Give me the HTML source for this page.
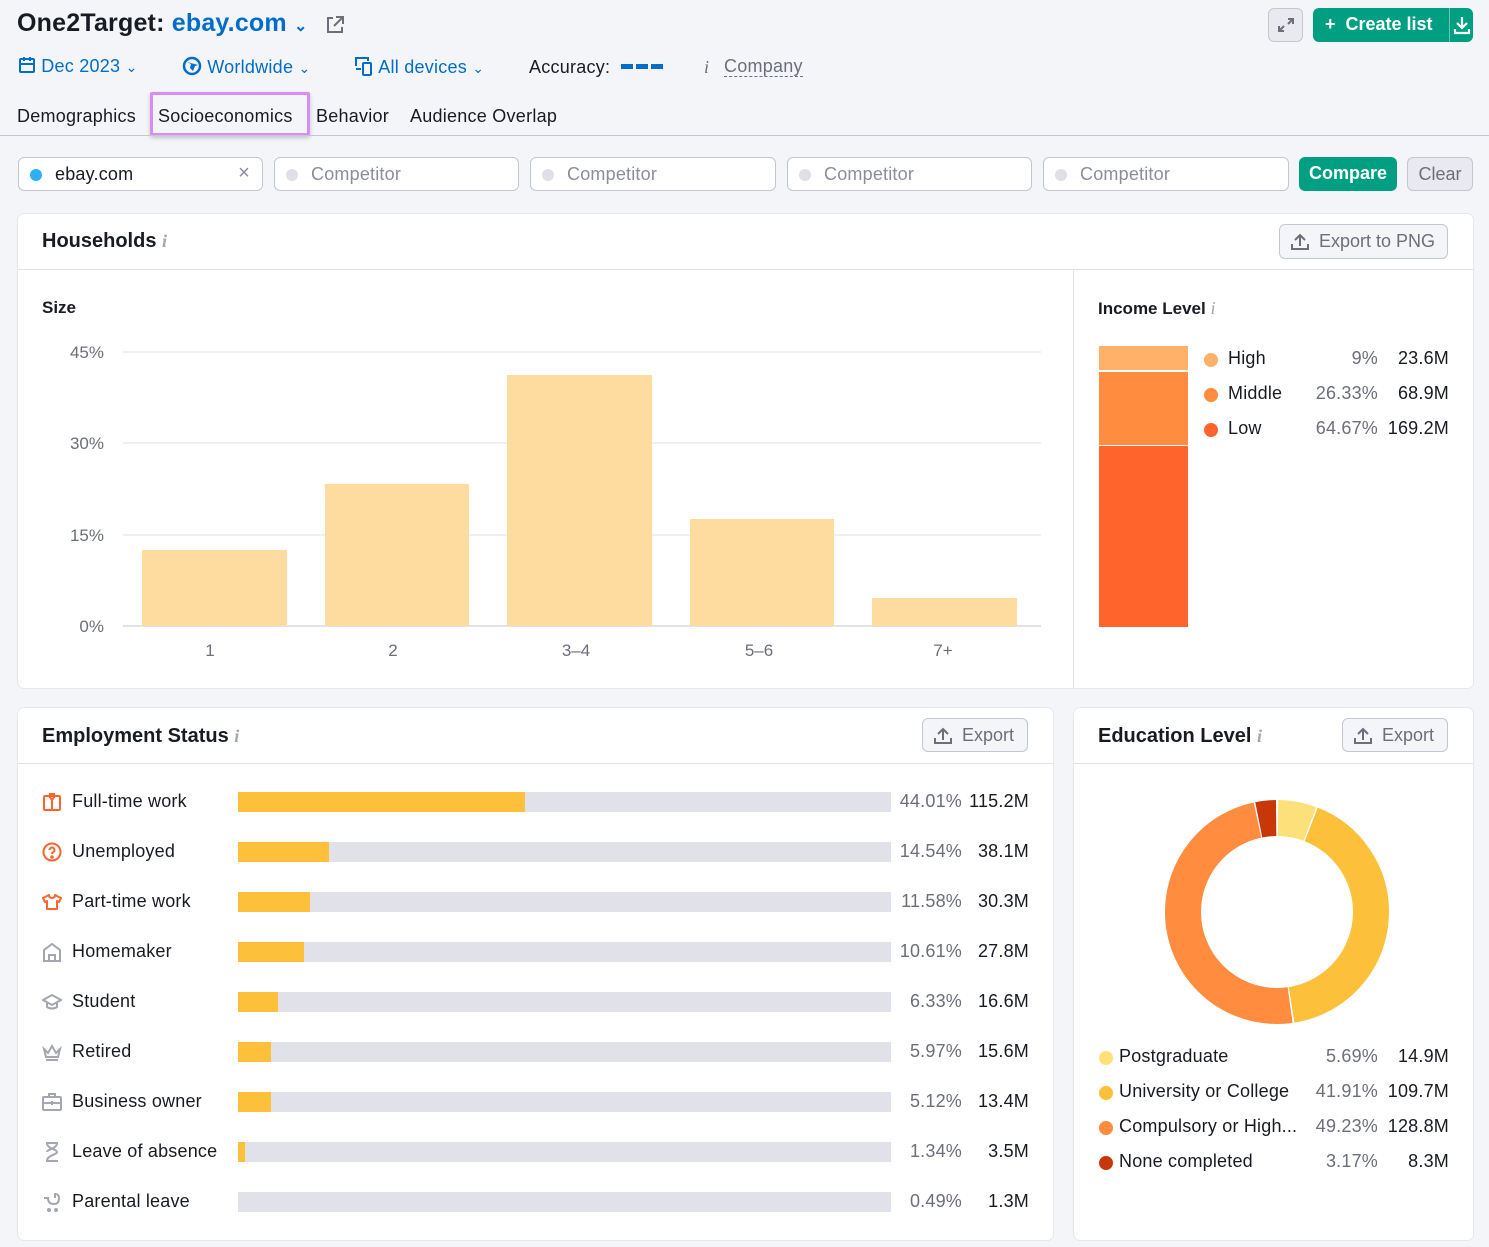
<!DOCTYPE html>
<html><head><meta charset="utf-8"><style>
*{box-sizing:border-box;margin:0;padding:0}
body{width:1489px;height:1247px;background:#f4f5f9;font-family:"Liberation Sans",sans-serif;color:#191b23;position:relative;overflow:hidden}
.a{position:absolute}
.blue{color:#006dca}
.t{font-size:18px;letter-spacing:.25px}
.inp{position:absolute;top:157px;height:34px;background:#fff;border:1px solid #c4c7cf;border-radius:6px;font-size:18px;letter-spacing:.2px;color:#8b8e99;padding:6px 0 0 36px}
.inp i{position:absolute;left:11px;top:11px;width:12px;height:12px;border-radius:50%;background:#dfe0e6}
.card{position:absolute;background:#fff;border-radius:6px;box-shadow:0 0 0 1px #e6e7ec}
.btn{position:absolute;border:1px solid #c4c7cf;background:#f4f5f9;border-radius:6px;font-size:18px;color:#6c6e79}
.h{font-size:20px;font-weight:bold}
.ic{color:#a4a6b0;font-style:italic;font-family:"Liberation Serif",serif;font-size:18px}
.row{position:absolute;left:42px;width:990px;height:20px;font-size:18px;letter-spacing:.2px}
.row .l{position:absolute;left:30px;top:-1px}
.row .bg{position:absolute;left:196px;top:0;width:653px;height:20px;background:#e0e1e9}
.row .f{position:absolute;left:0;top:0;height:20px;background:#fcc03b}
.row .p{position:absolute;right:70px;top:-1px;color:#6c6e79;text-align:right}
.row .v{position:absolute;right:3px;top:-1px;text-align:right}
.row svg{position:absolute;left:0;top:0}
.lg{position:absolute;font-size:18px;letter-spacing:.2px;width:350px;height:22px}
.lg i{position:absolute;left:0;top:5px;width:14px;height:14px;border-radius:50%}
.lg .p{position:absolute;right:71px;color:#6c6e79}
.lg .v{position:absolute;right:0}
</style></head><body>
<div class="a" style="left:17px;top:9px;font-size:25px;font-weight:bold;letter-spacing:.2px">One2Target: <span class="blue">ebay.com</span> <span class="blue" style="font-size:16px">⌄</span></div>
<svg class="a" style="left:325px;top:15px" width="20" height="20" viewBox="0 0 20 20" fill="none" stroke="#6c6e79" stroke-width="2"><path d="M8 3H3v14h14v-5M11 2h7v7M18 2l-9 9"/></svg>
<div class="a blue t" style="left:18px;top:56px">
<svg width="18" height="18" viewBox="0 0 18 18" style="vertical-align:-2px" fill="none" stroke="#006dca" stroke-width="2"><rect x="2" y="3" width="14" height="13" rx="1"/><path d="M2 8h14M6 1v4M12 1v4"/></svg> Dec 2023 <span style="font-size:14px">⌄</span></div>
<div class="a blue t" style="left:182px;top:56px"><svg width="20" height="20" viewBox="0 0 20 20" style="vertical-align:-3px"><circle cx="10" cy="10" r="8" fill="none" stroke="#006dca" stroke-width="2.5"/><path d="M5 6l4 2-1 4 3 3 2-5 3-1" fill="#006dca"/></svg> Worldwide <span style="font-size:14px">⌄</span></div>
<div class="a blue t" style="left:354px;top:56px"><svg width="20" height="20" viewBox="0 0 20 20" style="vertical-align:-3px" fill="none" stroke="#006dca" stroke-width="2"><path d="M2 10V2h12v3M2 13h5"/><rect x="9" y="7" width="8" height="12" rx="1"/></svg> All devices <span style="font-size:14px">⌄</span></div>
<div class="a t" style="left:529px;top:57px">Accuracy:</div>
<div class="a" style="left:621px;top:64px;width:42px;height:5px;background:linear-gradient(90deg,#006dca 0 12px,transparent 12px 15px,#006dca 15px 27px,transparent 27px 30px,#006dca 30px)"></div>
<div class="a ic" style="left:704px;top:57px;color:#6c6e79">i</div>
<div class="a t" style="left:724px;top:56px;color:#6c6e79;border-bottom:1px dashed #6c6e79;line-height:20px">Company</div>
<div class="a" style="left:1268px;top:8px;width:35px;height:34px;border:1px solid #c4c7cf;background:#e9eaef;border-radius:6px"><svg width="33" height="32" viewBox="0 0 33 32" fill="none" stroke="#6c6e79" stroke-width="2"><path d="M19 10h5v5M24 10l-5 5M10 17v5h5M10 22l5-5"/></svg></div>
<div class="a" style="left:1313px;top:8px;width:160px;height:34px;background:#009f81;border-radius:6px;color:#fff;font-size:18px;font-weight:bold;padding:6px 0 0 12px">+&nbsp;&nbsp;Create list<div class="a" style="left:136px;top:0;width:1px;height:34px;background:#5fc8b4"></div><svg class="a" style="left:139px;top:7px" width="20" height="20" viewBox="0 0 20 20" fill="none" stroke="#fff" stroke-width="2.2"><path d="M10 2v11M5 8l5 5 5-5M3 14v4h14v-4"/></svg></div>
<div class="a t" style="left:17px;top:106px">Demographics</div>
<div class="a" style="left:150px;top:92px;width:160px;height:44px;border:3px solid #d78cf7;border-radius:2px;box-shadow:0 2px 4px rgba(0,0,0,.2)"></div>
<div class="a t" style="left:158px;top:106px">Socioeconomics</div>
<div class="a t" style="left:316px;top:106px">Behavior</div>
<div class="a t" style="left:410px;top:106px">Audience Overlap</div>
<div class="a" style="left:0;top:135px;width:1489px;height:1px;background:#c4c7cf"></div>
<div class="inp" style="left:18px;width:245px;color:#191b23"><i style="background:#2bb0f9"></i>ebay.com<span class="a" style="right:12px;top:4px;color:#8b8e99;font-size:20px">×</span></div>
<div class="inp" style="left:274px;width:245px"><i></i>Competitor</div>
<div class="inp" style="left:530px;width:246px"><i></i>Competitor</div>
<div class="inp" style="left:787px;width:245px"><i></i>Competitor</div>
<div class="inp" style="left:1043px;width:246px"><i></i>Competitor</div>
<div class="a" style="left:1299px;top:157px;width:98px;height:34px;background:#009f81;border-radius:6px;color:#fff;font-size:18px;font-weight:bold;text-align:center;padding-top:6px">Compare</div>
<div class="btn" style="left:1407px;top:157px;width:66px;height:34px;text-align:center;padding-top:6px;font-size:18px;background:#e9eaef">Clear</div>

<div class="card" style="left:18px;top:214px;width:1455px;height:474px">
<div class="a h" style="left:24px;top:16px">Households <span class="ic">i</span></div>
<div class="btn" style="left:1261px;top:10px;width:169px;height:35px;padding:6px 0 0 39px"><svg class="a" style="left:10px;top:8px" width="20" height="18" viewBox="0 0 20 18" fill="none" stroke="#6c6e79" stroke-width="2"><path d="M10 13V2M5 7l5-5 5 5M2 11v5h16v-5"/></svg>Export to PNG</div>
<div class="a" style="left:0;top:55px;width:1455px;height:1px;background:#e0e1e9"></div>
<div class="a" style="left:1055px;top:56px;width:1px;height:418px;background:#e0e1e9"></div>
<div class="a" style="left:24px;top:84px;font-size:17px;font-weight:bold">Size</div>
<svg class="a" style="left:0;top:0" width="1055" height="474" font-family="Liberation Sans" font-size="17" fill="#6c6e79">
<g stroke="#e0e1e9"><line x1="105" y1="138" x2="1023" y2="138"/><line x1="105" y1="229" x2="1023" y2="229"/><line x1="105" y1="321" x2="1023" y2="321"/><line x1="105" y1="412" x2="1023" y2="412" stroke="#c4c7cf"/></g>
<text x="86" y="144" text-anchor="end">45%</text><text x="86" y="235" text-anchor="end">30%</text><text x="86" y="327" text-anchor="end">15%</text><text x="86" y="418" text-anchor="end">0%</text>
<g fill="#fedc9f"><rect x="124" y="336" width="145" height="76"/><rect x="307" y="270" width="144" height="142"/><rect x="489" y="161" width="145" height="251"/><rect x="672" y="305" width="144" height="107"/><rect x="854" y="384" width="145" height="28"/></g>
<g text-anchor="middle"><text x="192" y="442">1</text><text x="375" y="442">2</text><text x="558" y="442">3–4</text><text x="741" y="442">5–6</text><text x="925" y="442">7+</text></g>
</svg>
<div class="a" style="left:1080px;top:84px;font-size:17px;font-weight:bold">Income Level <span class="ic" style="font-weight:normal">i</span></div>
<div class="a" style="left:1081px;top:132px;width:89px;height:24px;background:#ffb16a"></div>
<div class="a" style="left:1081px;top:158px;width:89px;height:73px;background:#ff8c3f"></div>
<div class="a" style="left:1081px;top:232px;width:89px;height:181px;background:#ff642d"></div>
<div class="lg" style="left:1186px;top:134px;width:245px"><i style="background:#ffb16a"></i><span class="a" style="left:24px">High</span><span class="p">9%</span><span class="v">23.6M</span></div>
<div class="lg" style="left:1186px;top:169px;width:245px"><i style="background:#ff8c3f"></i><span class="a" style="left:24px">Middle</span><span class="p">26.33%</span><span class="v">68.9M</span></div>
<div class="lg" style="left:1186px;top:204px;width:245px"><i style="background:#ff642d"></i><span class="a" style="left:24px">Low</span><span class="p">64.67%</span><span class="v">169.2M</span></div>
</div>

<div class="card" style="left:18px;top:708px;width:1035px;height:532px">
<div class="a h" style="left:24px;top:17px">Employment Status <span class="ic">i</span></div>
<div class="btn" style="left:904px;top:10px;width:106px;height:34px;padding:6px 0 0 39px"><svg class="a" style="left:10px;top:8px" width="20" height="18" viewBox="0 0 20 18" fill="none" stroke="#6c6e79" stroke-width="2"><path d="M10 13V2M5 7l5-5 5 5M2 11v5h16v-5"/></svg>Export</div>
<div class="a" style="left:0;top:55px;width:1035px;height:1px;background:#e0e1e9"></div>
</div>
<div class="row" style="top:792px"><svg width="20" height="20" viewBox="0 0 20 20" fill="none" stroke="#ff642d" stroke-width="2"><rect x="2" y="4" width="16" height="14" rx="1"/><path d="M7 4l3 4 3-4M10 8v10M7 2h6"/></svg><span class="l">Full-time work</span><div class="bg"><div class="f" style="width:287px"></div></div><span class="p">44.01%</span><span class="v">115.2M</span></div>
<div class="row" style="top:842px"><svg width="20" height="20" viewBox="0 0 20 20" fill="none" stroke="#ff642d" stroke-width="2"><circle cx="10" cy="10" r="8.5"/><path d="M7.5 8a2.5 2.5 0 1 1 3.5 2.3c-.7.4-1 .9-1 1.7"/><circle cx="10" cy="15" r=".8" fill="#ff642d"/></svg><span class="l">Unemployed</span><div class="bg"><div class="f" style="width:91px"></div></div><span class="p">14.54%</span><span class="v">38.1M</span></div>
<div class="row" style="top:892px"><svg width="20" height="20" viewBox="0 0 20 20" fill="none" stroke="#ff642d" stroke-width="2" stroke-linejoin="round"><path d="M7 3L1 6l2 4 2-1v8h10V9l2 1 2-4-6-3c0 2-1 3-3 3S7 5 7 3z"/></svg><span class="l">Part-time work</span><div class="bg"><div class="f" style="width:72px"></div></div><span class="p">11.58%</span><span class="v">30.3M</span></div>
<div class="row" style="top:942px"><svg width="20" height="20" viewBox="0 0 20 20" fill="none" stroke="#a4a6b0" stroke-width="2"><path d="M2 19V8l8-6 8 6v11H2z"/><path d="M7 19v-6h6v6"/></svg><span class="l">Homemaker</span><div class="bg"><div class="f" style="width:66px"></div></div><span class="p">10.61%</span><span class="v">27.8M</span></div>
<div class="row" style="top:992px"><svg width="20" height="20" viewBox="0 0 20 20" fill="none" stroke="#a4a6b0" stroke-width="2"><path d="M1 8l9-5 9 5-9 5z"/><path d="M5 10v5c3 2 7 2 10 0v-5"/></svg><span class="l">Student</span><div class="bg"><div class="f" style="width:40px"></div></div><span class="p">6.33%</span><span class="v">16.6M</span></div>
<div class="row" style="top:1042px"><svg width="20" height="20" viewBox="0 0 20 20" fill="none" stroke="#a4a6b0" stroke-width="2"><path d="M2 7l4 4 4-7 4 7 4-4-2 8H4z"/><path d="M4 18h12"/></svg><span class="l">Retired</span><div class="bg"><div class="f" style="width:33px"></div></div><span class="p">5.97%</span><span class="v">15.6M</span></div>
<div class="row" style="top:1092px"><svg width="20" height="20" viewBox="0 0 20 20" fill="none" stroke="#a4a6b0" stroke-width="2"><rect x="1" y="5" width="18" height="13" rx="1"/><path d="M7 5V2h6v3M1 11h18M10 9v4"/></svg><span class="l">Business owner</span><div class="bg"><div class="f" style="width:33px"></div></div><span class="p">5.12%</span><span class="v">13.4M</span></div>
<div class="row" style="top:1142px"><svg width="20" height="20" viewBox="0 0 20 20" fill="none" stroke="#a4a6b0" stroke-width="2"><path d="M4 1h12M4 19h12M5 1c0 6 10 6 10 9s-10 3-10 9M15 1c0 6-10 6-10 9"/></svg><span class="l">Leave of absence</span><div class="bg"><div class="f" style="width:7px"></div></div><span class="p">1.34%</span><span class="v">3.5M</span></div>
<div class="row" style="top:1192px"><svg width="20" height="20" viewBox="0 0 20 20" fill="none" stroke="#a4a6b0" stroke-width="2"><path d="M2 6h4c0 4 2 6 6 6s5-3 5-6-2-4-4-4v4"/><circle cx="7" cy="18" r="1"/><circle cx="14" cy="18" r="1"/></svg><span class="l">Parental leave</span><div class="bg"><div class="f" style="width:0px"></div></div><span class="p">0.49%</span><span class="v">1.3M</span></div>

<div class="card" style="left:1074px;top:708px;width:399px;height:532px">
<div class="a h" style="left:24px;top:17px">Education Level <span class="ic">i</span></div>
<div class="btn" style="left:268px;top:10px;width:106px;height:34px;padding:6px 0 0 39px"><svg class="a" style="left:10px;top:8px" width="20" height="18" viewBox="0 0 20 18" fill="none" stroke="#6c6e79" stroke-width="2"><path d="M10 13V2M5 7l5-5 5 5M2 11v5h16v-5"/></svg>Export</div>
<div class="a" style="left:0;top:55px;width:399px;height:1px;background:#e0e1e9"></div>
<svg class="a" style="left:91px;top:92px" width="224" height="224" viewBox="0 0 224 224">
<g transform="rotate(-90 112 112)" fill="none" stroke-width="36">
<circle cx="112" cy="112" r="94" stroke="#fde07a" stroke-dasharray="32.6 600" stroke-dashoffset="-1"/>
<circle cx="112" cy="112" r="94" stroke="#fcc03b" stroke-dasharray="245.5 600" stroke-dashoffset="-35"/>
<circle cx="112" cy="112" r="94" stroke="#ff8c3f" stroke-dasharray="288.7 600" stroke-dashoffset="-282"/>
<circle cx="112" cy="112" r="94" stroke="#c8370a" stroke-dasharray="17.5 600" stroke-dashoffset="-572"/>
</g></svg>
<div class="lg" style="left:25px;top:338px;width:350px"><i style="background:#fde07a"></i><span class="a" style="left:20px">Postgraduate</span><span class="p">5.69%</span><span class="v">14.9M</span></div>
<div class="lg" style="left:25px;top:373px;width:350px"><i style="background:#fcc03b"></i><span class="a" style="left:20px">University or College</span><span class="p">41.91%</span><span class="v">109.7M</span></div>
<div class="lg" style="left:25px;top:408px;width:350px"><i style="background:#ff8c3f"></i><span class="a" style="left:20px">Compulsory or High...</span><span class="p">49.23%</span><span class="v">128.8M</span></div>
<div class="lg" style="left:25px;top:443px;width:350px"><i style="background:#c8370a"></i><span class="a" style="left:20px">None completed</span><span class="p">3.17%</span><span class="v">8.3M</span></div>
</div>
</body></html>
